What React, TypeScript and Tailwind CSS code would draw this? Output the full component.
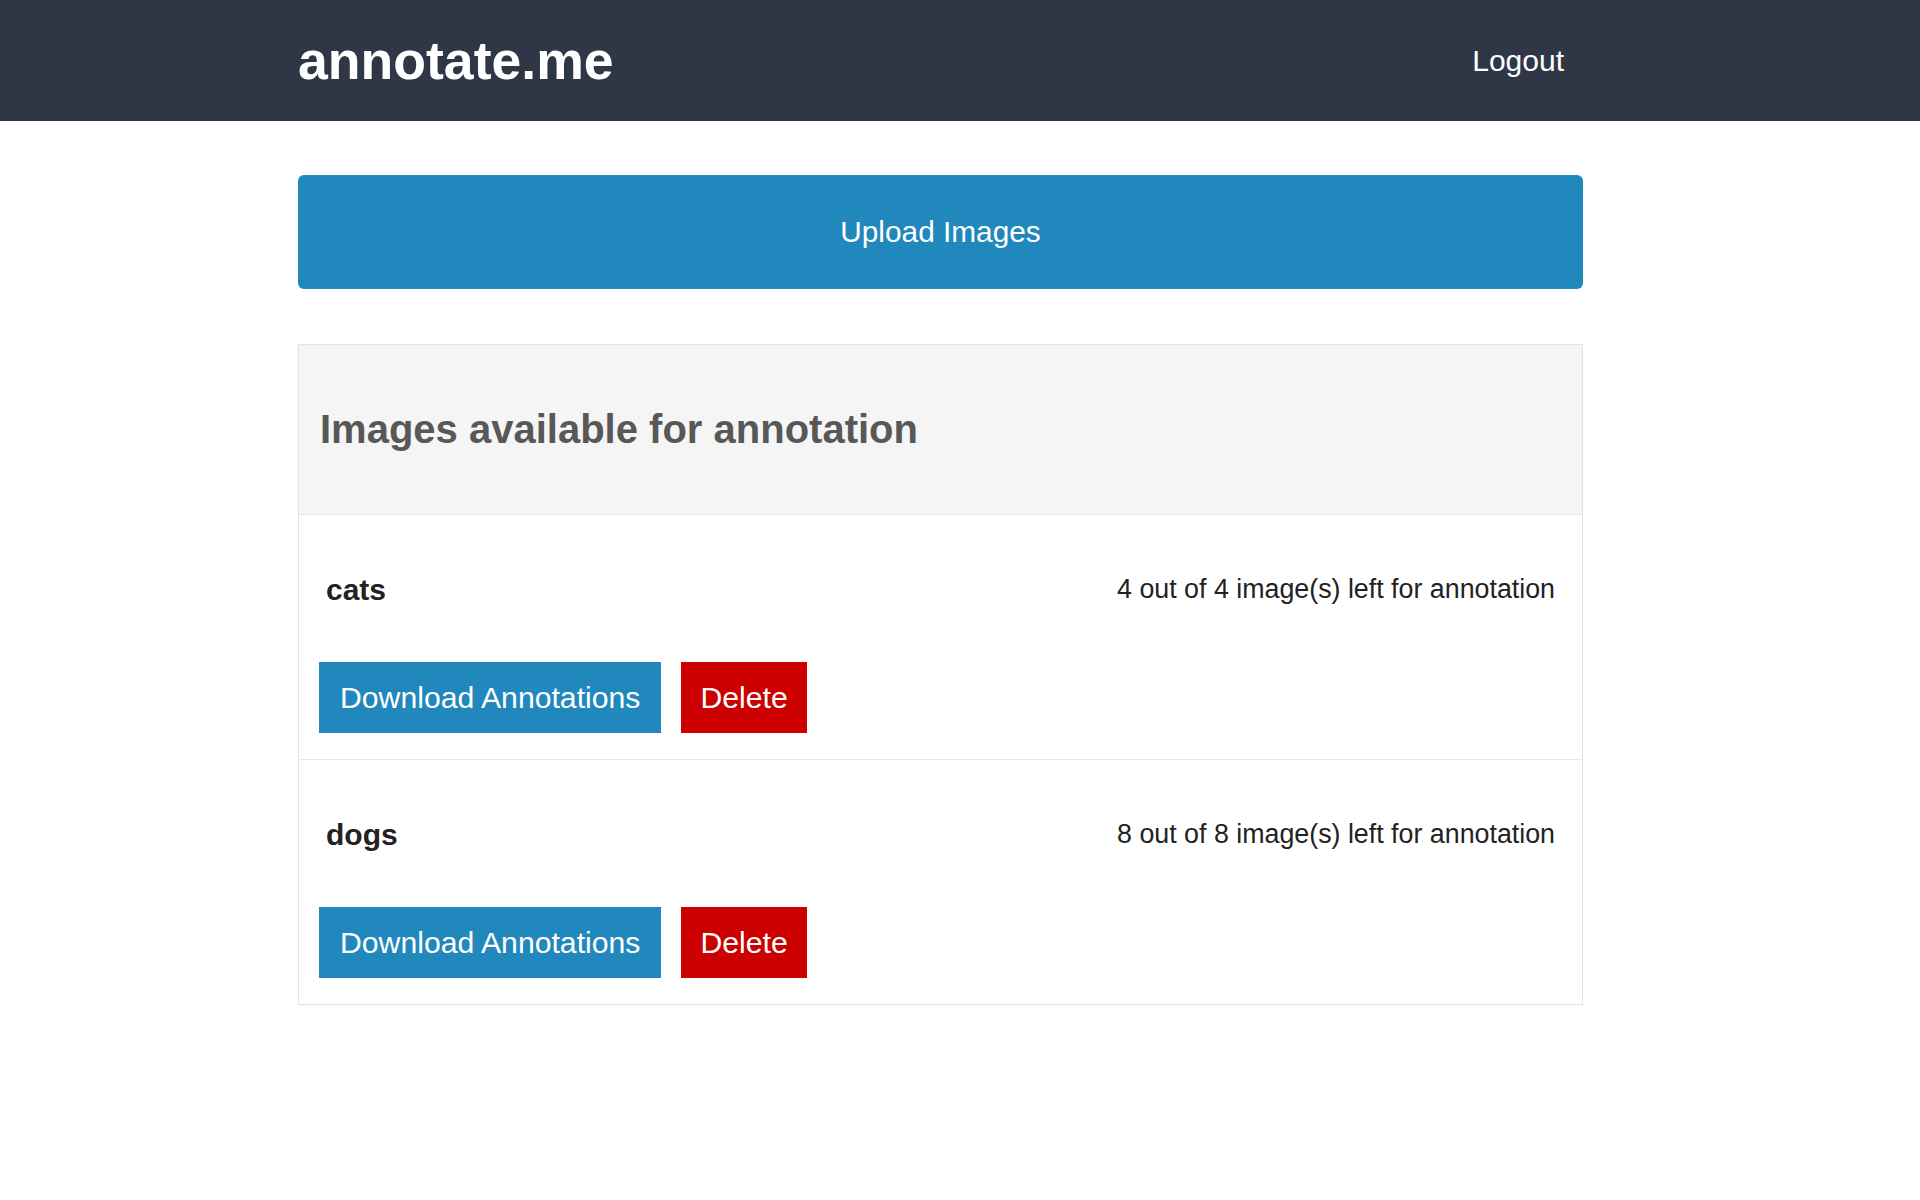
const folders = [
  { name: "cats", left: 4, total: 4 },
  { name: "dogs", left: 8, total: 8 },
];

const FolderRow = ({ name, left, total }: { name: string; left: number; total: number }) => {
  return (
    <div className="border-t border-[#e6e6e6] px-[20px] pt-[55px] pb-[26px]">
      <div className="flex items-center justify-between h-[38px]">
        <span className="pl-[7px] text-[30px] font-bold text-[#222]">{name}</span>
        <span className="pr-[7px] text-[26.8px] text-[#222]">
          {left} out of {total} image(s) left for annotation
        </span>
      </div>
      <div className="mt-[54px] flex gap-[20px]">
        <button className="h-[71px] px-[21px] bg-[#2088bd] text-white text-[30.2px]">
          Download Annotations
        </button>
        <button className="h-[71px] px-[19px] bg-[#cc0000] text-white text-[30.2px]">
          Delete
        </button>
      </div>
    </div>
  );
};

export default function App() {
  return (
    <div className="min-h-screen bg-white font-['Liberation_Sans',Arial,sans-serif]">
      <header className="h-[121px] bg-[#2f3747]">
        <div className="ml-[298px] w-[1286px] h-full flex items-center justify-between pr-[20px]">
          <span className="text-[53.6px] font-bold text-white leading-none">annotate.me</span>
          <a className="text-[30px] text-white cursor-pointer">Logout</a>
        </div>
      </header>
      <main className="ml-[298px] w-[1285px] pt-[54px]">
        <button className="w-full h-[114px] rounded-[6px] bg-[#2088bd] text-white text-[29.8px]">
          Upload Images
        </button>
        <div className="mt-[55px] border border-[#e3e3e3]">
          <div className="h-[169px] bg-[#f5f5f5] flex items-center px-[21px] pb-[2px]">
            <h2 className="text-[40px] font-bold text-[#585858]">Images available for annotation</h2>
          </div>
          {folders.map((f) => (
            <FolderRow key={f.name} {...f} />
          ))}
        </div>
      </main>
    </div>
  );
}
